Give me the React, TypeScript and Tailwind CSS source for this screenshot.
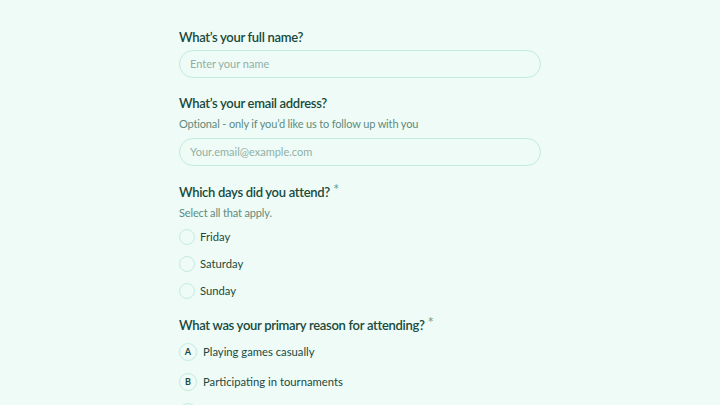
import React from "react";

const font = { fontFamily: "Lato, 'Noto Sans', sans-serif" };

function Label({ children, required }: { children: React.ReactNode; required?: boolean }) {
  return (
    <div className="flex items-start text-[13px] leading-[20px] font-semibold tracking-[-0.3px] text-[#174a3b]">
      <span>{children}</span>
      {required && <span className="ml-[3px] text-[15px] leading-[14px] text-[#6a9f8e] font-normal">*</span>}
    </div>
  );
}

export default function App() {
  return (
    <div className="w-[720px] h-[405px] overflow-hidden bg-[#effbf7]" style={font}>
      <div className="w-[362px] ml-[179px] pt-[27px] flex flex-col">
        <Label>What’s your full name?</Label>
        <div className="mt-[3px] h-[28px] rounded-full border border-[#c3ebdf] flex items-center px-[10px] text-[11px] text-[#8fb0a5]">
          Enter your name
        </div>

        <div className="mt-[15px]">
          <Label>What’s your email address?</Label>
        </div>
        <div className="mt-[1px] text-[11px] leading-[20px] tracking-[-0.15px] text-[#5e8b7d]">Optional - only if you’d like us to follow up with you</div>
        <div className="mt-[4px] h-[28px] rounded-full border border-[#c3ebdf] flex items-center px-[10px] text-[11px] text-[#8fb0a5]">
          Your.email@example.com
        </div>

        <div className="mt-[16px]">
          <Label required>Which days did you attend?</Label>
        </div>
        <div className="mt-[1px] text-[11px] leading-[20px] tracking-[-0.15px] text-[#5e8b7d]">Select all that apply.</div>

        <div className="mt-[4px] flex flex-col gap-[7px]">
          {["Friday", "Saturday", "Sunday"].map((d) => (
            <div key={d} className="flex items-center h-[20px]">
              <div className="w-[16px] h-[16px] rounded-full border border-[#c3ebdf]" />
              <span className="ml-[5px] text-[11.25px] text-[#1a4a3c]">{d}</span>
            </div>
          ))}
        </div>

        <div className="mt-[14px]">
          <Label required>What was your primary reason for attending?</Label>
        </div>

        <div className="mt-[7px] flex flex-col gap-[10px]">
          {[
            ["A", "Playing games casually"],
            ["B", "Participating in tournaments"],
            ["C", "Meeting other players"],
          ].map(([k, t]) => (
            <div key={k} className="flex items-center h-[20px]">
              <div className="w-[18px] h-[18px] rounded-full border border-[#c3ebdf] flex items-center justify-center text-[9px] font-bold text-[#1a4a3c]">
                {k}
              </div>
              <span className="ml-[6px] text-[11.25px] text-[#1a4a3c]">{t}</span>
            </div>
          ))}
        </div>
      </div>
    </div>
  );
}
